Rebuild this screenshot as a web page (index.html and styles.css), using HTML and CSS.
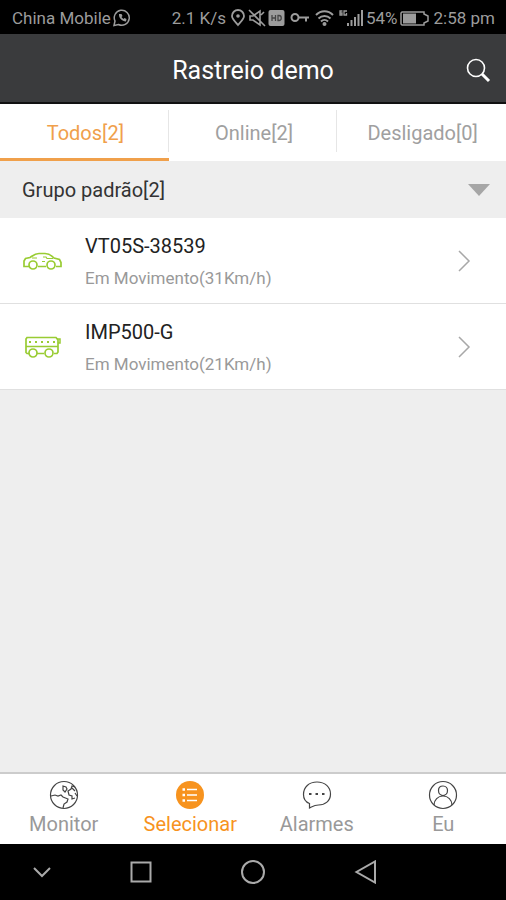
FILE: index.html
```html
<!DOCTYPE html>
<html lang="pt-BR">
<head>
    <meta charset="UTF-8">
    <meta name="viewport" content="width=device-width, initial-scale=1.0">
    <title>Rastreio demo</title>
    <link rel="stylesheet" href="styles.css">
</head>
<body>
    <div class="status-bar">
        <div class="status-group">
            <span>China Mobile</span>
            <svg width="18" height="18" viewBox="0 0 18 18" fill="none" stroke="currentColor" stroke-width="1.500">
                <path d="M1 16.500l1-4.500a7.500 7.500 0 1 1 3.500 3.500z"/>
                <path d="M6 5c-.5 3.500 3 7.500 7 7.500l.5-2.500-2-1-1 1c-1-.5-1.700-1.200-2-2l1-1-1-2z" fill="currentColor" stroke="none"/>
            </svg>
        </div>
        <div class="status-group">
            <span>2.1 K/s</span>
            <svg class="icon-pin" width="14" height="18" viewBox="0 0 14 18" fill="none" stroke="currentColor" stroke-width="1.800">
                <path d="M7 16C4 12.500 1 10 1 7a6 6 0 0 1 12 0c0 3-3 5.500-6 9z"/>
                <circle cx="7" cy="7" r="1.800" fill="currentColor" stroke="none"/>
            </svg>
            <svg width="18" height="18" viewBox="0 0 18 18" fill="none" stroke="currentColor" stroke-width="1.600">
                <path d="M2 7v4h3l7 5V2L5 7zM1 1l16 16M13 6l3-3"/>
            </svg>
            <svg width="17" height="18" viewBox="0 0 17 18">
                <rect x="0.500" y="1" width="16" height="16" rx="2" fill="currentColor"/>
                <path d="M4 6v6M7.500 6v6M4 9h3.500M10 6.500v5h1c3 0 3-5 0-5z" fill="none" stroke="#444" stroke-width="1.300"/>
            </svg>
            <svg class="icon-key" width="20" height="18" viewBox="0 0 20 18" fill="none" stroke="currentColor" stroke-width="2">
                <circle cx="5" cy="8.500" r="3.500"/>
                <path d="M8.500 8.500H19M16 8.500v4"/>
            </svg>
            <svg width="19" height="18" viewBox="0 0 19 18" fill="none" stroke="currentColor" stroke-width="2">
                <path d="M1 6c5-5 12-5 17 0M3.500 9.500c3.500-3.500 8.500-3.500 12 0M6 12.500c2-2 5-2 7 0"/>
                <circle cx="9.500" cy="15" r="2" fill="currentColor" stroke="none"/>
            </svg>
            <svg class="icon-signal" width="26" height="18" viewBox="0 0 26 18" fill="none" stroke="currentColor">
                <path d="M4.500 2H2v4h2V4H2M9 2H6v4h2.500V4" stroke-width="1.300"/>
                <path d="M10 17v-3M13.500 17v-6M17 17V8M20.500 17V5M24 17V1" stroke-width="2"/>
            </svg>
            <span>54%</span>
            <svg class="icon-battery" width="30" height="18" viewBox="0 0 30 18">
                <path d="M2 3h22v2l4 2v5l-4 2v2H2l-1-1V4z" fill="none" stroke="currentColor" stroke-width="1.500"/>
                <path d="M3 4.500h13v10H3z" fill="currentColor"/>
            </svg>
            <span>2:58 pm</span>
        </div>
    </div>

    <header class="header">
        <h1>Rastreio demo</h1>
        <button type="button" class="search-button" aria-label="Buscar">
            <svg width="26" height="26" viewBox="0 0 26 26" fill="none" stroke="currentColor">
                <circle cx="10" cy="10" r="8.500" stroke-width="1.600"/>
                <path d="M16 16l7 7" stroke-width="3"/>
            </svg>
        </button>
    </header>

    <nav class="tabs">
        <a href="#todos" class="tab active">Todos[2]</a>
        <a href="#online" class="tab">Online[2]</a>
        <a href="#desligado" class="tab">Desligado[0]</a>
    </nav>

    <main>
        <button type="button" class="group-header" aria-expanded="true">
            <span>Grupo padrão[2]</span>
            <svg width="22" height="12" viewBox="0 0 22 12"><path d="M0 0h22L11 12z" fill="#a6a6a6"/></svg>
        </button>

        <ul class="device-list">
            <li>
                <a href="#VT05S-38539" class="device">
                    <svg class="device-icon" width="40" height="24" viewBox="0 0 40 24" fill="none" stroke="currentColor" stroke-width="1.700">
                        <path d="M7 17.500H2V12l1.500-2.500L8 8.500c3-2 5-4 9-4h6c4 0 6 1.500 9 4.500l5.500 1.500 1.500 3v4H34M16 17.500h8"/>
                        <circle cx="11" cy="16" r="4"/>
                        <circle cx="29" cy="16" r="4"/>
                        <path d="M10 9h5M21 8h3l1 1.500h6M20 12.500h3" stroke-width="1.200"/>
                    </svg>
                    <div class="device-info">
                        <span class="device-name">VT05S-38539</span>
                        <span class="device-status">Em Movimento(31Km/h)</span>
                    </div>
                    <svg class="device-arrow" width="14" height="22" viewBox="0 0 14 22"><path d="M2 1l10 10L2 21"/></svg>
                </a>
            </li>
            <li>
                <a href="#IMP500-G" class="device">
                    <svg class="device-icon" width="40" height="24" viewBox="0 0 40 24" fill="none" stroke="currentColor" stroke-width="1.700">
                        <path d="M7 18.500H5l-1-1V4l1-1.500h29L36 5v12l-1 1.500H32M15 18.500h7M4 11.500h32"/>
                        <circle cx="11" cy="18" r="4"/>
                        <circle cx="27" cy="18" r="4"/>
                        <path d="M7 7h2M13 7h2M19 7h2M25 7h2M31 7h2" stroke-width="2"/>
                        <path d="M35 4h3v4h-2" stroke-width="1.500"/>
                    </svg>
                    <div class="device-info">
                        <span class="device-name">IMP500-G</span>
                        <span class="device-status">Em Movimento(21Km/h)</span>
                    </div>
                    <svg class="device-arrow" width="14" height="22" viewBox="0 0 14 22"><path d="M2 1l10 10L2 21"/></svg>
                </a>
            </li>
        </ul>
    </main>

    <nav class="bottom-nav">
        <a href="#monitor" class="nav-item">
            <svg width="30" height="30" viewBox="0 0 30 30" fill="none" stroke="#444" stroke-width="1.200">
                <circle cx="15" cy="15" r="13.500"/>
                <path d="M2 16l4-1 3 1 3-1 2 2 5 2-1 3-3 2-1 4M14 6l3 1 1 2-2 3-2-2zM26 7l-3-1-1 3-3 2 1 4 3 1v3l3-1M23 8l3 3M26 13l2 3"/>
            </svg>
            <span>Monitor</span>
        </a>
        <a href="#selecionar" class="nav-item active">
            <svg width="30" height="30" viewBox="0 0 30 30" fill="none" stroke="#fff">
                <circle cx="15" cy="15" r="14" fill="#f7931e" stroke="none"/>
                <path d="M12 9.500h10M12 15h10M12 20.500h10" stroke-width="1.500"/>
                <path d="M7.500 9.500h2.500M7.500 15h2.500M7.500 20.500h2.500" stroke-width="2.500"/>
            </svg>
            <span>Selecionar</span>
        </a>
        <a href="#alarmes" class="nav-item">
            <svg width="30" height="30" viewBox="0 0 30 30" fill="none" stroke="#444" stroke-width="1.200">
                <path d="M7.500 28v-4.500C3.500 22 1.500 18.500 1.500 14.500 1.500 7 7 2 15 2s13.500 5 13.500 12-5.500 11-12 11c-3.500 0-5 1-9 3z"/>
                <path d="M7 14h2.500M13.500 14H16M20 14h2.500" stroke-width="2"/>
            </svg>
            <span>Alarmes</span>
        </a>
        <a href="#eu" class="nav-item">
            <svg width="30" height="30" viewBox="0 0 30 30" fill="none" stroke="#444" stroke-width="1.200">
                <circle cx="15" cy="15" r="13.500"/>
                <path d="M15 6c-3 0-4.500 2-4.500 4.500S12 15.500 15 15.500s4.500-2.500 4.500-5S18 6 15 6zM6 25c0-5 4-9 9-9s9 4 9 9"/>
            </svg>
            <span>Eu</span>
        </a>
    </nav>

    <div class="system-nav">
        <button type="button" aria-label="Ocultar">
            <svg width="24" height="24" viewBox="0 0 24 24"><path d="M4 8l8 8 8-8"/></svg>
        </button>
        <button type="button" aria-label="Recentes">
            <svg width="24" height="24" viewBox="0 0 24 24"><path d="M2.500 2.500h19v19h-19z"/></svg>
        </button>
        <button type="button" aria-label="Início">
            <svg width="26" height="26" viewBox="0 0 26 26"><circle cx="13" cy="13" r="11"/></svg>
        </button>
        <button type="button" aria-label="Voltar">
            <svg width="24" height="24" viewBox="0 0 24 24"><path d="M22 1.500v21L3.500 12z"/></svg>
        </button>
    </div>
</body>
</html>
```

FILE: styles.css
```css
* {
    box-sizing: border-box;
}

body {
    display: flex;
    flex-direction: column;
    min-height: 100vh;
    margin: 0;
    font-family: Roboto, "Liberation Sans", sans-serif;
    background-color: #eee;
    color: #333;
}

a {
    color: inherit;
    text-decoration: none;
}

button {
    border: none;
    padding: 0;
    background: none;
    color: inherit;
    font-family: inherit;
    cursor: pointer;
}

svg {
    display: block;
    flex-shrink: 0;
}

/* Barra de status */
.status-bar {
    display: flex;
    justify-content: space-between;
    padding: 2px 11px 0 12px;
    height: 34px;
    background-color: #000;
    color: #9c9c9c;
    font-size: 17px;
    white-space: nowrap;
}

.status-group {
    display: flex;
    align-items: center;
    gap: 2px;
}

.icon-pin {
    margin: 0 1px 0 3px;
}

.icon-key {
    margin: 0 3px;
}

.icon-signal {
    margin-left: 2px;
}

.icon-battery {
    margin-right: 2px;
}

/* Cabeçalho */
.header {
    display: grid;
    grid-template-columns: 1fr auto 1fr;
    align-items: center;
    height: 70px;
    padding: 5px 14px 0;
    border-bottom: 2px solid #111;
    background-color: #3a3b3d;
    color: #fff;
}

.header h1 {
    grid-column: 2;
    margin: 0;
    font-size: 25px;
    font-weight: 400;
    line-height: 32px;
}

.search-button {
    justify-self: end;
}

/* Abas */
.tabs {
    display: grid;
    grid-template-columns: repeat(3, 1fr);
    height: 57px;
    background-color: #fff;
    color: #a0a0a0;
    font-size: 20px;
}

.tab {
    display: flex;
    align-items: center;
    justify-content: center;
    padding: 4px 0 0 2px;
    border-bottom: 3px solid transparent;
    background: linear-gradient(#e6e6e6, #e6e6e6) right center / 1px 42px no-repeat;
}

.tab:last-child {
    background: none;
}

.tab.active {
    border-bottom-color: #f0a04b;
    color: #f0a04b;
}

/* Lista de dispositivos */
main {
    flex: 1;
}

.group-header {
    display: flex;
    align-items: center;
    justify-content: space-between;
    width: 100%;
    height: 57px;
    padding: 0 16px 0 22px;
    font-size: 20px;
    color: #333;
}

.device-list {
    margin: 0;
    padding: 0;
    list-style: none;
    background-color: #fff;
}

.device {
    display: flex;
    align-items: center;
    height: 86px;
    padding: 0 35px 0 22px;
    border-bottom: 1px solid #e0e0e0;
}

.device-icon {
    color: #9c3;
}

.device-info {
    display: flex;
    flex: 1;
    flex-direction: column;
    gap: 8px;
    margin-left: 23px;
    padding-top: 2px;
}

.device-name {
    font-size: 20px;
    line-height: 24px;
    color: #222;
}

.device-status {
    font-size: 17px;
    line-height: 24px;
    color: #999;
}

.device-arrow {
    fill: none;
    stroke: #a8a8a8;
    stroke-width: 1.5;
}

/* Menu inferior */
.bottom-nav {
    display: grid;
    grid-template-columns: repeat(4, 1fr);
    height: 72px;
    border-top: 2px solid #ccc;
    background-color: #fff;
    color: #999;
    font-size: 20px;
    line-height: 24px;
}

.nav-item {
    display: flex;
    flex-direction: column;
    align-items: center;
    padding: 6px 0 0 1px;
    gap: 2px;
}

.nav-item.active {
    color: #f7931e;
}

/* Botões do sistema */
.system-nav {
    display: grid;
    grid-template-columns: 3fr 4fr 4fr 4fr 3fr;
    height: 56px;
    background-color: #000;
}

.system-nav button {
    display: flex;
    align-items: center;
    justify-content: center;
}

.system-nav svg {
    fill: none;
    stroke: #aaa;
    stroke-width: 2;
}
```
